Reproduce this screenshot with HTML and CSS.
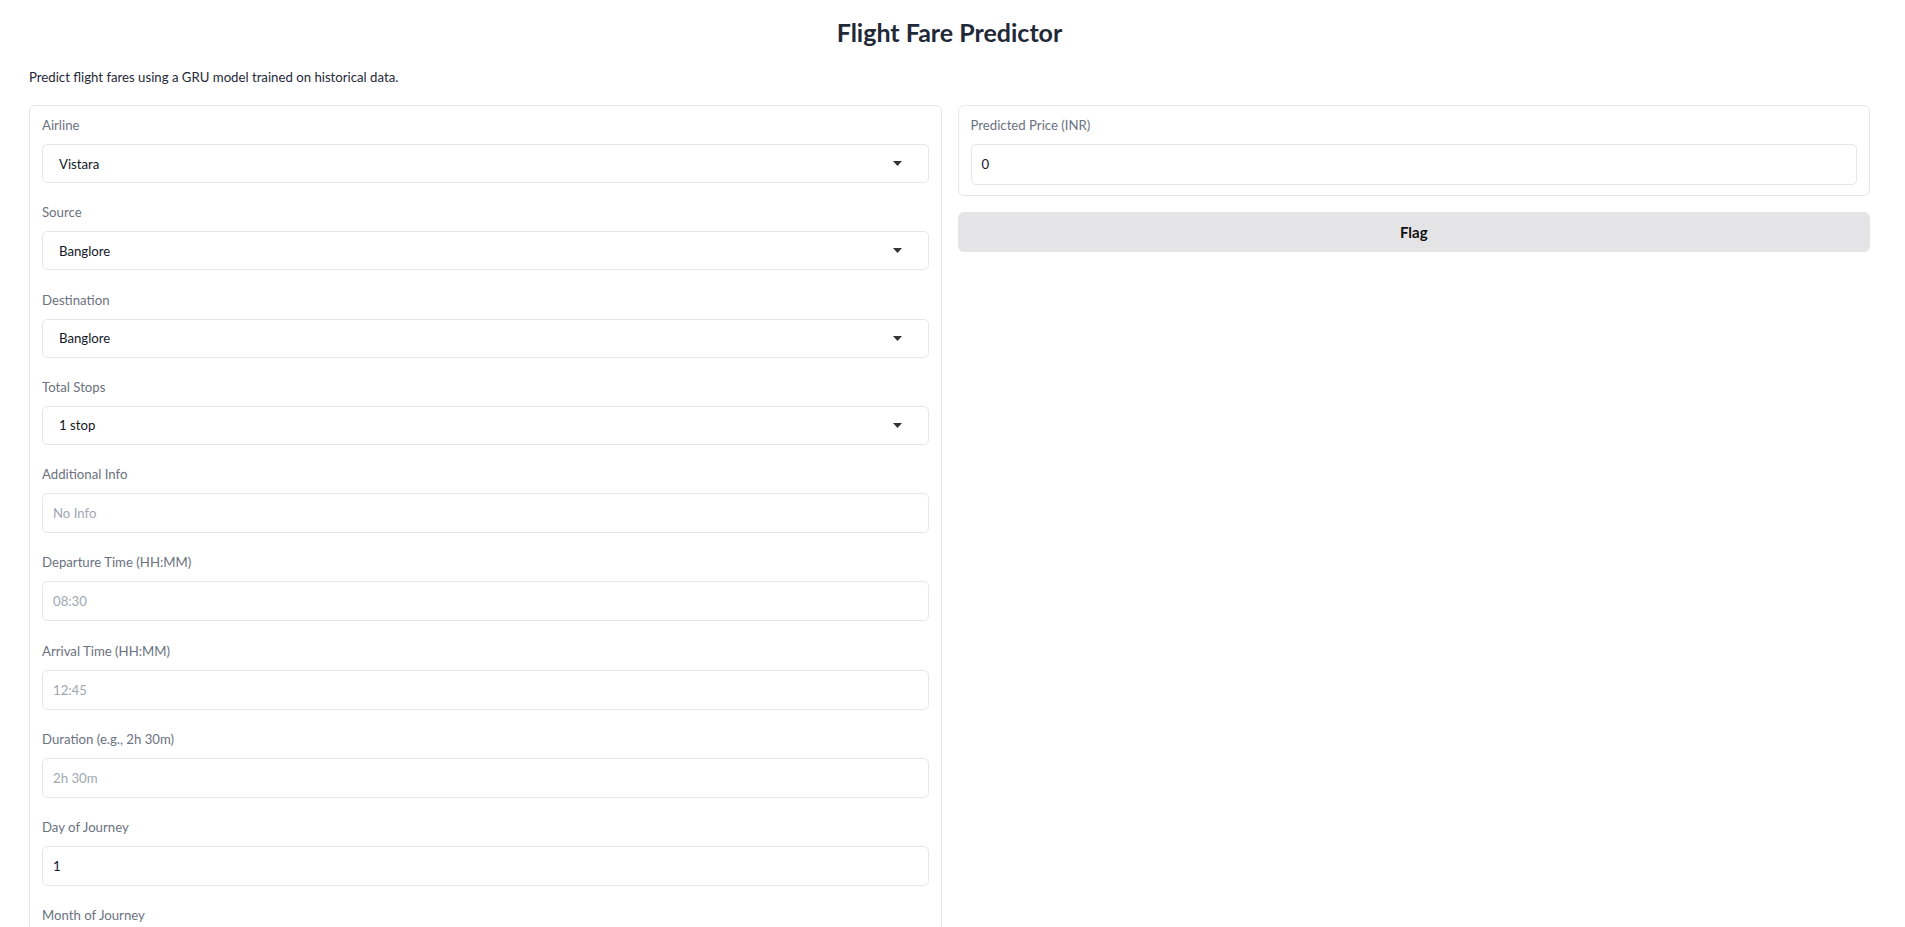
FILE: index.html
```html
<!DOCTYPE html>
<html lang="en">
<head>
<meta charset="utf-8">
<title>Flight Fare Predictor</title>
<link rel="stylesheet" href="styles.css">
</head>
<body>
<div class="app">
  <h1 class="title">Flight Fare Predictor</h1>
  <p class="subtitle">Predict flight fares using a GRU model trained on historical data.</p>
  <div class="columns">
    <div class="panel inputs-panel">
      <div class="field">
        <span class="label">Airline</span>
        <div class="select"><span class="value">Vistara</span><svg class="caret" width="9" height="5" viewBox="0 0 9 5"><path d="M0 0H9L4.5 5Z" fill="#333"/></svg></div>
      </div>
      <div class="field">
        <span class="label">Source</span>
        <div class="select"><span class="value">Banglore</span><svg class="caret" width="9" height="5" viewBox="0 0 9 5"><path d="M0 0H9L4.5 5Z" fill="#333"/></svg></div>
      </div>
      <div class="field">
        <span class="label">Destination</span>
        <div class="select"><span class="value">Banglore</span><svg class="caret" width="9" height="5" viewBox="0 0 9 5"><path d="M0 0H9L4.5 5Z" fill="#333"/></svg></div>
      </div>
      <div class="field">
        <span class="label">Total Stops</span>
        <div class="select"><span class="value">1 stop</span><svg class="caret" width="9" height="5" viewBox="0 0 9 5"><path d="M0 0H9L4.5 5Z" fill="#333"/></svg></div>
      </div>
      <div class="field">
        <span class="label">Additional Info</span>
        <div class="text-input"><span class="placeholder">No Info</span></div>
      </div>
      <div class="field">
        <span class="label">Departure Time (HH:MM)</span>
        <div class="text-input"><span class="placeholder">08:30</span></div>
      </div>
      <div class="field">
        <span class="label">Arrival Time (HH:MM)</span>
        <div class="text-input"><span class="placeholder">12:45</span></div>
      </div>
      <div class="field">
        <span class="label">Duration (e.g., 2h 30m)</span>
        <div class="text-input"><span class="placeholder">2h 30m</span></div>
      </div>
      <div class="field">
        <span class="label">Day of Journey</span>
        <div class="text-input"><span class="value">1</span></div>
      </div>
      <div class="field">
        <span class="label">Month of Journey</span>
        <div class="text-input"></div>
      </div>
    </div>
    <div class="right-col">
      <div class="panel output-panel">
        <div class="field">
          <span class="label">Predicted Price (INR)</span>
          <div class="text-input output-input"><span class="value">0</span></div>
        </div>
      </div>
      <button class="flag-btn" type="button">Flag</button>
    </div>
  </div>
</div>
</body>
</html>
```
FILE: styles.css
```css
* { box-sizing: border-box; }
html, body { margin: 0; padding: 0; background: #ffffff; }
body {
  font-family: "Lato", "Liberation Sans", sans-serif;
  font-size: 13.2px;
  color: #1f2937;
}
.app {
  padding: 17px 35px 40px 29px;
}
.title {
  margin: 0;
  text-align: center;
  font-size: 25px;
  line-height: 30px;
  font-weight: 700;
  color: #1f2937;
}
.subtitle {
  margin: 20px 0 0 0;
  font-size: 13.2px;
  line-height: 20px;
  color: #1f2937;
}
.columns {
  margin-top: 18px;
  display: grid;
  grid-template-columns: 1fr 1fr;
  gap: 16px;
  align-items: start;
}
.panel {
  border: 1px solid #e5e7eb;
  border-radius: 6px;
  background: #ffffff;
  padding: 9px 12px 10px 12px;
  display: flex;
  flex-direction: column;
  gap: 19.25px;
}
.output-panel { padding-bottom: 10.5px; }
.field {
  display: flex;
  flex-direction: column;
}
.label {
  display: block;
  font-size: 13.2px;
  line-height: 20px;
  color: #6b7280;
  margin-bottom: 9px;
}
.select {
  height: 39px;
  border: 1px solid #e5e7eb;
  border-radius: 5px;
  display: flex;
  align-items: center;
  justify-content: space-between;
  padding: 0 26px 0 16px;
  line-height: 20px;
}
.caret { display: block; }
.text-input {
  height: 40px;
  border: 1px solid #e5e7eb;
  border-radius: 5px;
  padding: 0 10px;
  display: flex;
  align-items: center;
  line-height: 20px;
  background: #ffffff;
}
.output-input { height: 40.5px; }
.value { color: #111827; }
.placeholder { color: #a1a7b3; }
.right-col {
  display: flex;
  flex-direction: column;
  gap: 16px;
}
.flag-btn {
  height: 40px;
  border: none;
  border-radius: 6px;
  background: #e4e4e7;
  font-family: "Lato", "Liberation Sans", sans-serif;
  font-size: 15px;
  font-weight: 700;
  color: #111111;
  cursor: pointer;
}
```
